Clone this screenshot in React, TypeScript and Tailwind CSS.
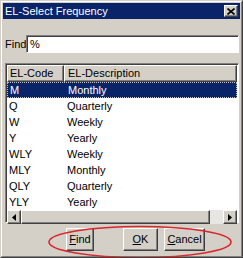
import React from 'react';

const rows = [
  { code: 'M', desc: 'Monthly' },
  { code: 'Q', desc: 'Quarterly' },
  { code: 'W', desc: 'Weekly' },
  { code: 'Y', desc: 'Yearly' },
  { code: 'WLY', desc: 'Weekly' },
  { code: 'MLY', desc: 'Monthly' },
  { code: 'QLY', desc: 'Quarterly' },
  { code: 'YLY', desc: 'Yearly' },
];

const raised =
  'border border-t-white border-l-white border-r-[#404040] border-b-[#404040] shadow-[inset_-1px_-1px_0_#808080]';

const Arrow: React.FC<{ dir: 'left' | 'right' }> = ({ dir }) => (
  <div className={`w-[14px] h-[14px] bg-[#d4d0c8] flex items-center justify-center ${raised}`}>
    <svg width="4" height="7" viewBox="0 0 4 7">
      {dir === 'left' ? <path d="M4 0 L0 3.5 L4 7 Z" fill="#000" /> : <path d="M0 0 L4 3.5 L0 7 Z" fill="#000" />}
    </svg>
  </div>
);

const Button: React.FC<{ hot: string; rest: string; w: string }> = ({ hot, rest, w }) => (
  <div className={`${w} h-[23px] bg-[#d4d0c8] flex items-center justify-center text-[11px] text-black border border-t-white border-l-white border-r-[#404040] border-b-[#404040] shadow-[inset_-1px_-1px_0_#808080]`}>
    <span className="underline">{hot}</span>
    {rest}
  </div>
);

export default function App() {
  return (
    <div className="w-[243px] h-[258px] relative overflow-hidden bg-[#d4d0c8] border border-t-[#d4d0c8] border-l-[#d4d0c8] border-r-[#404040] border-b-[#404040] font-['Liberation_Sans',Arial,sans-serif] text-[11px] text-black">
      <div className="h-full border border-t-white border-l-white border-r-[#808080] border-b-[#808080] p-px flex flex-col">
        {/* title bar */}
        <div className="h-[16px] bg-[#0a246a] flex items-center justify-between pl-[2px] pr-[2px]">
          <span className="text-white text-[11px] leading-none">EL-Select Frequency</span>
          <div className={`w-[14px] h-[12px] bg-[#d4d0c8] flex items-center justify-center ${raised}`}>
            <svg width="8" height="7" viewBox="0 0 8 7">
              <path d="M0.5 0.5 L7.5 6.5 M7.5 0.5 L0.5 6.5" stroke="#000" strokeWidth="1.6" />
            </svg>
          </div>
        </div>

        {/* find row */}
        <div className="flex items-center mt-[16px] pl-[2px] pr-[1px]">
          <span className="shrink-0 w-[21px]">Find</span>
          <div className="flex-1 h-[18px] bg-white border border-t-[#808080] border-l-[#808080] border-r-white border-b-white shadow-[inset_1px_1px_0_#404040] flex items-center pl-[3px]">
            %
          </div>
        </div>

        {/* list */}
        <div className="mt-[10px] ml-[2px] mr-[1px] h-[160px] bg-white border border-t-[#808080] border-l-[#808080] border-r-white border-b-white shadow-[inset_1px_1px_0_#404040] p-px flex flex-col">
          <div className="flex h-[17px] bg-[#d4d0c8]">
            <div className={`w-[57px] flex items-center pl-[2px] ${raised}`}>EL-Code</div>
            <div className={`flex-1 flex items-center pl-[3px] ${raised}`}>EL-Description</div>
          </div>
          <div className="flex-1 flex flex-col">
            {rows.map((r, i) => (
              <div
                key={r.code}
                className={`flex h-[16px] items-center ${i === 0 ? 'bg-[#0a246a] text-white border border-dotted border-[#c0c0c0]' : ''}`}
              >
                <span className="w-[57px] pl-[2px]">{r.code}</span>
                <span className="pl-[3px]">{r.desc}</span>
              </div>
            ))}
          </div>
          <div className="flex h-[14px]">
            <Arrow dir="left" />
            <div className="flex-1 flex bg-[#e8e6e2]">
              <div className={`w-[189px] h-[14px] bg-[#d4d0c8] ${raised}`} />
            </div>
            <Arrow dir="right" />
          </div>
        </div>

        {/* buttons */}
        <div className="flex mt-[5px] pl-[63px]">
          <Button hot="F" rest="ind" w="w-[28px]" />
          <div className="w-[29px]" />
          <Button hot="O" rest="K" w="w-[35px]" />
          <div className="w-[6px]" />
          <Button hot="C" rest="ancel" w="w-[41px]" />
        </div>
      </div>

      {/* red annotation ellipse */}
      <svg className="absolute left-[46px] top-[224px]" width="186" height="36" viewBox="0 0 186 36">
        <ellipse cx="93" cy="17" rx="91" ry="15.5" fill="none" stroke="#d8262c" strokeWidth="1.6" />
      </svg>
    </div>
  );
}
